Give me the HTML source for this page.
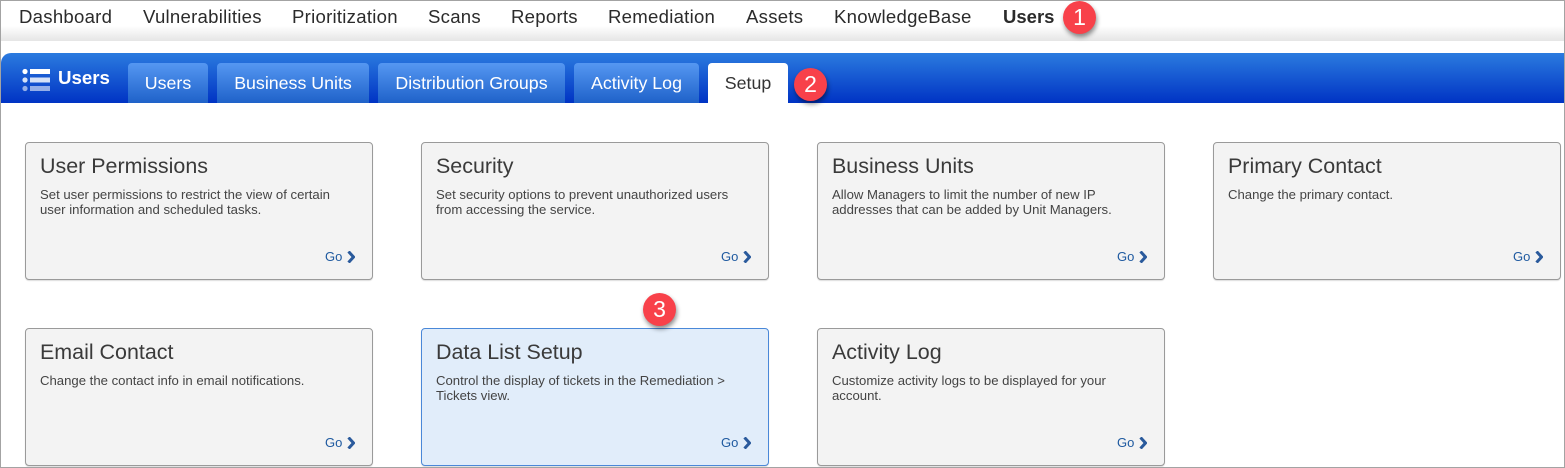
<!DOCTYPE html>
<html><head><meta charset="utf-8">
<style>
html,body{margin:0;padding:0;background:#fff}
#p{position:relative;width:1565px;height:468px;overflow:hidden;background:#fff;font-family:"Liberation Sans",sans-serif;color:#333}
#p div{position:absolute;box-sizing:border-box;white-space:nowrap}
.f{left:0;top:0;width:1565px;height:468px;border:1px solid #a3a3a3;z-index:20}
.nb{left:1px;top:1px;width:1563px;height:40px;background:linear-gradient(#fff 0,#fff 62%,#e5e5e5 100%)}
.n{top:7px;font-size:18.6px;line-height:20px;color:#2b2b2b;letter-spacing:.25px}
.bar{left:1px;top:53px;width:1563px;height:50px;background:linear-gradient(#2b7bdf,#0033c4);border-top-left-radius:10px}
.t{top:63px;height:40px;border-radius:4px 4px 0 0;background:linear-gradient(#5597f2,#1f62c9);color:#fff;font-size:17.8px;line-height:40px;text-align:center}
.c{width:348px;height:138px;background:#f3f3f3;border:1px solid #9a9a9a;border-radius:4px;box-shadow:0 1px 1px #ddd}
.c.s{background:#e1edfa;border-color:#4a88d8}
.h{left:14px;top:10px;font-size:21.45px;line-height:26px;color:#3a3a3a}
.d{left:14px;top:44px;font-size:13.15px;line-height:15px;color:#444}
.g{left:299px;top:106px;font-size:13px;line-height:15px;color:#1f5aa0}
.c svg{position:absolute;left:321px;top:108px}
.b{width:33px;height:33px;border-radius:50%;background:#f8414a;color:#fff;font-size:23px;line-height:33px;text-align:center;box-shadow:1px 3px 5px rgba(0,0,0,.45);z-index:10}
</style></head><body><div id="p">
<div class="nb"></div>
<div class="n" style="left:19px">Dashboard</div>
<div class="n" style="left:143px">Vulnerabilities</div>
<div class="n" style="left:292px">Prioritization</div>
<div class="n" style="left:428px">Scans</div>
<div class="n" style="left:511px">Reports</div>
<div class="n" style="left:608px">Remediation</div>
<div class="n" style="left:746px">Assets</div>
<div class="n" style="left:834px">KnowledgeBase</div>
<div class="n" style="left:1003px;font-weight:bold;letter-spacing:0;font-size:18.5px">Users</div>
<div class="b" style="left:1063px;top:1px">1</div>

<div class="bar"></div>
<svg style="position:absolute;left:22px;top:68px" width="29" height="24" viewBox="0 0 29 24">
<g fill="#fff"><circle cx="3" cy="3.5" r="2.6"/><rect x="8" y="1" width="20" height="5"/></g>
<g fill="#d5e1f7"><circle cx="3" cy="12" r="2.6"/><rect x="8" y="9.5" width="20" height="5"/></g>
<g fill="#94aee8"><circle cx="3" cy="20.5" r="2.6"/><rect x="8" y="18" width="20" height="5"/></g>
</svg>
<div style="left:58px;top:68px;font-size:18.7px;line-height:20px;font-weight:bold;color:#fff">Users</div>
<div class="t" style="left:128px;width:80px">Users</div>
<div class="t" style="left:217px;width:152px">Business Units</div>
<div class="t" style="left:378px;width:187px">Distribution Groups</div>
<div class="t" style="left:574px;width:125px">Activity Log</div>
<div class="t" style="left:708px;width:80px;background:#fff;color:#333">Setup</div>
<div class="b" style="left:794px;top:68px">2</div>

<div class="c" style="left:25px;top:142px"><div class="h">User Permissions</div><div class="d">Set user permissions to restrict the view of certain<br>user information and scheduled tasks.</div><div class="g">Go</div><svg width="8" height="12" viewBox="0 0 8 12"><path d="M1.500 .5L6.500 6 1.500 11.500" fill="none" stroke="#2a5a9c" stroke-width="3"/></svg></div>
<div class="c" style="left:421px;top:142px"><div class="h">Security</div><div class="d">Set security options to prevent unauthorized users<br>from accessing the service.</div><div class="g">Go</div><svg width="8" height="12" viewBox="0 0 8 12"><path d="M1.500 .5L6.500 6 1.500 11.500" fill="none" stroke="#2a5a9c" stroke-width="3"/></svg></div>
<div class="c" style="left:817px;top:142px"><div class="h">Business Units</div><div class="d">Allow Managers to limit the number of new IP<br>addresses that can be added by Unit Managers.</div><div class="g">Go</div><svg width="8" height="12" viewBox="0 0 8 12"><path d="M1.500 .5L6.500 6 1.500 11.500" fill="none" stroke="#2a5a9c" stroke-width="3"/></svg></div>
<div class="c" style="left:1213px;top:142px"><div class="h">Primary Contact</div><div class="d">Change the primary contact.</div><div class="g">Go</div><svg width="8" height="12" viewBox="0 0 8 12"><path d="M1.500 .5L6.500 6 1.500 11.500" fill="none" stroke="#2a5a9c" stroke-width="3"/></svg></div>

<div class="c" style="left:25px;top:328px"><div class="h">Email Contact</div><div class="d">Change the contact info in email notifications.</div><div class="g">Go</div><svg width="8" height="12" viewBox="0 0 8 12"><path d="M1.500 .5L6.500 6 1.500 11.500" fill="none" stroke="#2a5a9c" stroke-width="3"/></svg></div>
<div class="c s" style="left:421px;top:328px"><div class="h">Data List Setup</div><div class="d">Control the display of tickets in the Remediation &gt;<br>Tickets view.</div><div class="g">Go</div><svg width="8" height="12" viewBox="0 0 8 12"><path d="M1.500 .5L6.500 6 1.500 11.500" fill="none" stroke="#2a5a9c" stroke-width="3"/></svg></div>
<div class="c" style="left:817px;top:328px"><div class="h">Activity Log</div><div class="d">Customize activity logs to be displayed for your<br>account.</div><div class="g">Go</div><svg width="8" height="12" viewBox="0 0 8 12"><path d="M1.500 .5L6.500 6 1.500 11.500" fill="none" stroke="#2a5a9c" stroke-width="3"/></svg></div>
<div class="b" style="left:643px;top:293px">3</div>
<div class="f"></div>
</div></body></html>
